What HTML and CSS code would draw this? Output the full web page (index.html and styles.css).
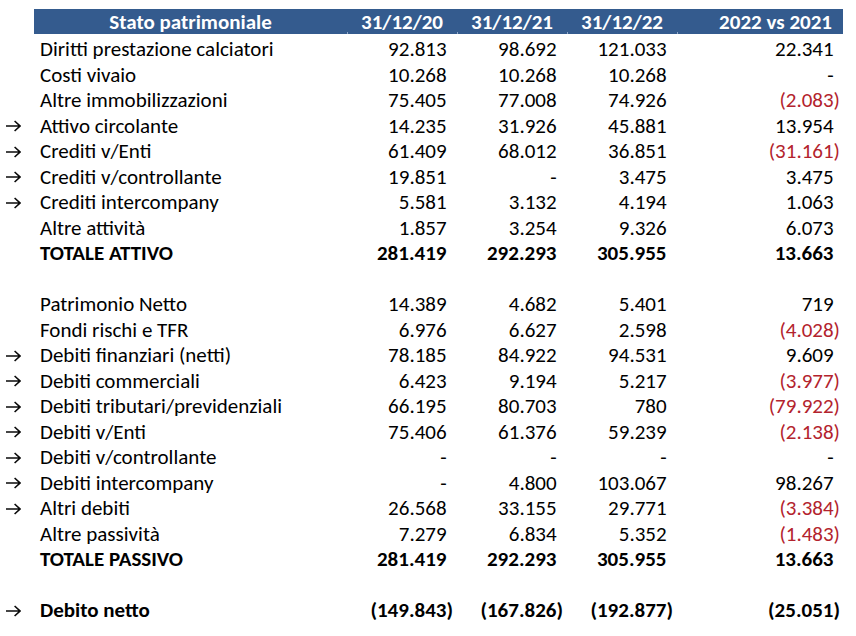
FILE: index.html
```html
<!DOCTYPE html>
<html lang="it">
<head>
<meta charset="utf-8">
<title>Stato patrimoniale</title>
<link rel="stylesheet" href="styles.css">
</head>
<body>
<div class="sheet">
  <div class="row head">
    <div class="c arrow"></div>
    <div class="c lab">Stato patrimoniale</div>
    <div class="c num">31/12/20</div>
    <div class="c num">31/12/21</div>
    <div class="c num">31/12/22</div>
    <div class="c num last">2022 vs 2021</div>
  </div>

  <div class="row"><div class="c arrow"></div><div class="c lab">Diritti prestazione calciatori</div><div class="c num"><span class="n">92.813</span></div><div class="c num"><span class="n">98.692</span></div><div class="c num"><span class="n">121.033</span></div><div class="c num last"><span class="n">22.341</span></div></div>
  <div class="row"><div class="c arrow"></div><div class="c lab">Costi vivaio</div><div class="c num"><span class="n">10.268</span></div><div class="c num"><span class="n">10.268</span></div><div class="c num"><span class="n">10.268</span></div><div class="c num last"><span class="n">-</span></div></div>
  <div class="row"><div class="c arrow"></div><div class="c lab">Altre immobilizzazioni</div><div class="c num"><span class="n">75.405</span></div><div class="c num"><span class="n">77.008</span></div><div class="c num"><span class="n">74.926</span></div><div class="c num last"><span class="n neg">(2.083)</span></div></div>
  <div class="row"><div class="c arrow"><svg class="ar" viewBox="0 0 16 12"><path d="M1 6H15M9.6 1L15 6L9.6 11"/></svg></div><div class="c lab">Attivo circolante</div><div class="c num"><span class="n">14.235</span></div><div class="c num"><span class="n">31.926</span></div><div class="c num"><span class="n">45.881</span></div><div class="c num last"><span class="n">13.954</span></div></div>
  <div class="row"><div class="c arrow"><svg class="ar" viewBox="0 0 16 12"><path d="M1 6H15M9.6 1L15 6L9.6 11"/></svg></div><div class="c lab">Crediti v/Enti</div><div class="c num"><span class="n">61.409</span></div><div class="c num"><span class="n">68.012</span></div><div class="c num"><span class="n">36.851</span></div><div class="c num last"><span class="n neg">(31.161)</span></div></div>
  <div class="row"><div class="c arrow"><svg class="ar" viewBox="0 0 16 12"><path d="M1 6H15M9.6 1L15 6L9.6 11"/></svg></div><div class="c lab">Crediti v/controllante</div><div class="c num"><span class="n">19.851</span></div><div class="c num"><span class="n">-</span></div><div class="c num"><span class="n">3.475</span></div><div class="c num last"><span class="n">3.475</span></div></div>
  <div class="row"><div class="c arrow"><svg class="ar" viewBox="0 0 16 12"><path d="M1 6H15M9.6 1L15 6L9.6 11"/></svg></div><div class="c lab">Crediti intercompany</div><div class="c num"><span class="n">5.581</span></div><div class="c num"><span class="n">3.132</span></div><div class="c num"><span class="n">4.194</span></div><div class="c num last"><span class="n">1.063</span></div></div>
  <div class="row"><div class="c arrow"></div><div class="c lab">Altre attività</div><div class="c num"><span class="n">1.857</span></div><div class="c num"><span class="n">3.254</span></div><div class="c num"><span class="n">9.326</span></div><div class="c num last"><span class="n">6.073</span></div></div>
  <div class="row b"><div class="c arrow"></div><div class="c lab">TOTALE ATTIVO</div><div class="c num"><span class="n">281.419</span></div><div class="c num"><span class="n">292.293</span></div><div class="c num"><span class="n">305.955</span></div><div class="c num last"><span class="n">13.663</span></div></div>
  <div class="row"></div>
  <div class="row"><div class="c arrow"></div><div class="c lab">Patrimonio Netto</div><div class="c num"><span class="n">14.389</span></div><div class="c num"><span class="n">4.682</span></div><div class="c num"><span class="n">5.401</span></div><div class="c num last"><span class="n">719</span></div></div>
  <div class="row"><div class="c arrow"></div><div class="c lab">Fondi rischi e TFR</div><div class="c num"><span class="n">6.976</span></div><div class="c num"><span class="n">6.627</span></div><div class="c num"><span class="n">2.598</span></div><div class="c num last"><span class="n neg">(4.028)</span></div></div>
  <div class="row"><div class="c arrow"><svg class="ar" viewBox="0 0 16 12"><path d="M1 6H15M9.6 1L15 6L9.6 11"/></svg></div><div class="c lab">Debiti finanziari (netti)</div><div class="c num"><span class="n">78.185</span></div><div class="c num"><span class="n">84.922</span></div><div class="c num"><span class="n">94.531</span></div><div class="c num last"><span class="n">9.609</span></div></div>
  <div class="row"><div class="c arrow"><svg class="ar" viewBox="0 0 16 12"><path d="M1 6H15M9.6 1L15 6L9.6 11"/></svg></div><div class="c lab">Debiti commerciali</div><div class="c num"><span class="n">6.423</span></div><div class="c num"><span class="n">9.194</span></div><div class="c num"><span class="n">5.217</span></div><div class="c num last"><span class="n neg">(3.977)</span></div></div>
  <div class="row"><div class="c arrow"><svg class="ar" viewBox="0 0 16 12"><path d="M1 6H15M9.6 1L15 6L9.6 11"/></svg></div><div class="c lab">Debiti tributari/previdenziali</div><div class="c num"><span class="n">66.195</span></div><div class="c num"><span class="n">80.703</span></div><div class="c num"><span class="n">780</span></div><div class="c num last"><span class="n neg">(79.922)</span></div></div>
  <div class="row"><div class="c arrow"><svg class="ar" viewBox="0 0 16 12"><path d="M1 6H15M9.6 1L15 6L9.6 11"/></svg></div><div class="c lab">Debiti v/Enti</div><div class="c num"><span class="n">75.406</span></div><div class="c num"><span class="n">61.376</span></div><div class="c num"><span class="n">59.239</span></div><div class="c num last"><span class="n neg">(2.138)</span></div></div>
  <div class="row"><div class="c arrow"><svg class="ar" viewBox="0 0 16 12"><path d="M1 6H15M9.6 1L15 6L9.6 11"/></svg></div><div class="c lab">Debiti v/controllante</div><div class="c num"><span class="n">-</span></div><div class="c num"><span class="n">-</span></div><div class="c num"><span class="n">-</span></div><div class="c num last"><span class="n">-</span></div></div>
  <div class="row"><div class="c arrow"><svg class="ar" viewBox="0 0 16 12"><path d="M1 6H15M9.6 1L15 6L9.6 11"/></svg></div><div class="c lab">Debiti intercompany</div><div class="c num"><span class="n">-</span></div><div class="c num"><span class="n">4.800</span></div><div class="c num"><span class="n">103.067</span></div><div class="c num last"><span class="n">98.267</span></div></div>
  <div class="row"><div class="c arrow"><svg class="ar" viewBox="0 0 16 12"><path d="M1 6H15M9.6 1L15 6L9.6 11"/></svg></div><div class="c lab">Altri debiti</div><div class="c num"><span class="n">26.568</span></div><div class="c num"><span class="n">33.155</span></div><div class="c num"><span class="n">29.771</span></div><div class="c num last"><span class="n neg">(3.384)</span></div></div>
  <div class="row"><div class="c arrow"></div><div class="c lab">Altre passività</div><div class="c num"><span class="n">7.279</span></div><div class="c num"><span class="n">6.834</span></div><div class="c num"><span class="n">5.352</span></div><div class="c num last"><span class="n neg">(1.483)</span></div></div>
  <div class="row b"><div class="c arrow"></div><div class="c lab">TOTALE PASSIVO</div><div class="c num"><span class="n">281.419</span></div><div class="c num"><span class="n">292.293</span></div><div class="c num"><span class="n">305.955</span></div><div class="c num last"><span class="n">13.663</span></div></div>
  <div class="row"></div>
  <div class="row b"><div class="c arrow"><svg class="ar" viewBox="0 0 16 12"><path d="M1 6H15M9.6 1L15 6L9.6 11"/></svg></div><div class="c lab">Debito netto</div><div class="c num"><span class="n p">(149.843)</span></div><div class="c num"><span class="n p">(167.826)</span></div><div class="c num"><span class="n p">(192.877)</span></div><div class="c num last"><span class="n p">(25.051)</span></div></div>
</div>
</body>
</html>
```

FILE: styles.css
```css
html, body {
  margin: 0;
  padding: 0;
  background: #ffffff;
}

body {
  font-family: Carlito, Lato, "Noto Sans", sans-serif;
  font-size: 21px;
  color: #000000;
}

.sheet {
  padding-top: 9px;
  width: 843px;
}

.row {
  display: grid;
  grid-template-columns: 34px 313px 110px 110px 110px 166px;
  height: 25.5px;
  line-height: 25.5px;
}

.c {
  white-space: nowrap;
  overflow: visible;
}

.arrow {
  display: flex;
  align-items: center;
  padding-left: 5px;
}

.ar {
  flex: none;
  width: 16px;
  height: 12px;
  fill: none;
  stroke: #0a0a0a;
  stroke-width: 1.6;
}

.lab {
  padding-left: 6px;
}

.num {
  text-align: right;
  padding-right: 4px;
}

.last {
  padding-right: 3px;
}

.n::after {
  content: ")";
  visibility: hidden;
}

.n.neg::after,
.n.p::after {
  content: none;
}

.neg {
  color: #b3232d;
}

.b {
  font-weight: 700;
}

.head {
  height: 25px;
  line-height: 27px;
  margin-bottom: 3px;
  color: #ffffff;
  font-weight: 700;
}

.head .c:not(.arrow) {
  background: #345b8e;
  position: relative;
  overflow: hidden;
}

.head .lab {
  text-align: center;
  padding-left: 0;
}

.head .num {
  padding-right: 14px;
}

.head .last {
  padding-right: 11px;
}

.head .num::before {
  content: "";
  position: absolute;
  left: 0;
  bottom: 0;
  width: 1px;
  height: 2px;
  background: #8ea6c6;
}
```
